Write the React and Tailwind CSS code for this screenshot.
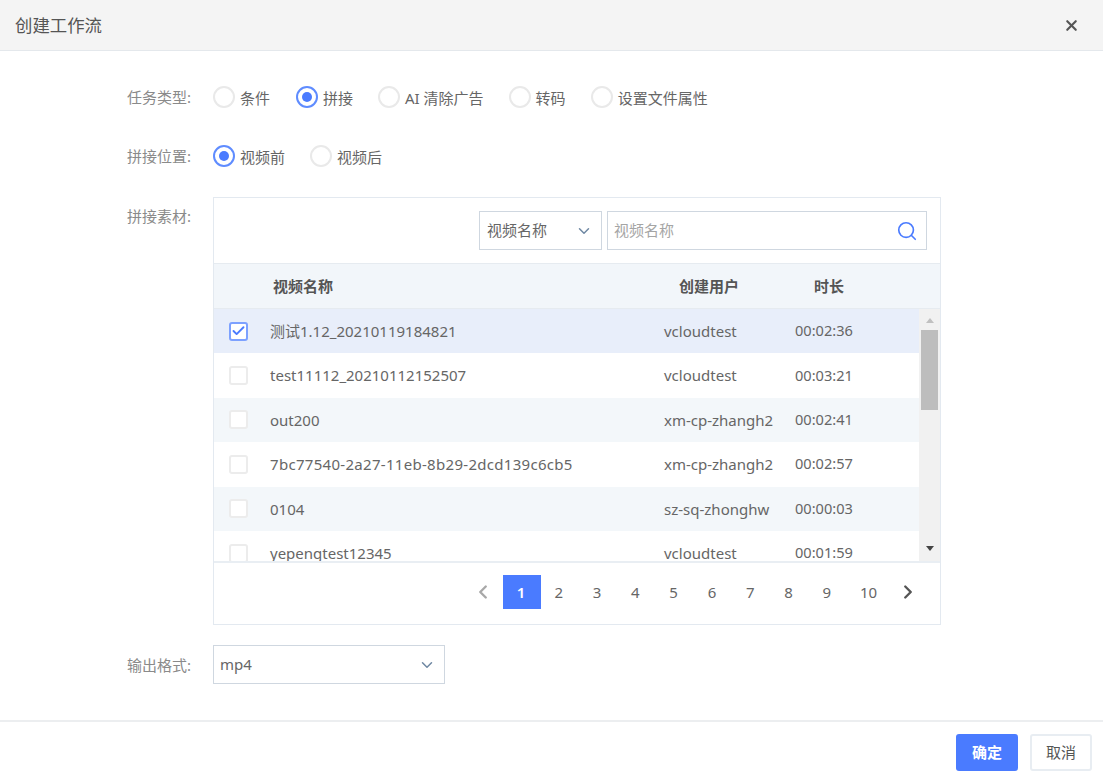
import { Search, ChevronDown, ChevronLeft, ChevronRight, Check, X } from "lucide-react";

const taskTypes = [
  { label: "条件", gap: "mr-[26px]" },
  { label: "拼接", checked: true, gap: "mr-[25px]" },
  { label: "AI 清除广告", gap: "mr-[25px]" },
  { label: "转码", gap: "mr-[25px]" },
  { label: "设置文件属性", gap: "" },
];

const videos = [
  { name: "测试1.12_20210119184821", user: "vcloudtest", time: "00:02:36", checked: true },
  { name: "test11112_20210112152507", user: "vcloudtest", time: "00:03:21" },
  { name: "out200", user: "xm-cp-zhangh2", time: "00:02:41" },
  { name: "7bc77540-2a27-11eb-8b29-2dcd139c6cb5", user: "xm-cp-zhangh2", time: "00:02:57", wide: true },
  { name: "0104", user: "sz-sq-zhonghw", time: "00:00:03" },
  { name: "yepengtest12345", user: "vcloudtest", time: "00:01:59" },
];

const Radio = ({ label, checked, gap }) => (
  <div className={`flex items-center ${gap}`}>
    <span
      className={`flex h-[22px] w-[22px] items-center justify-center rounded-full border-2 ${
        checked ? "border-[#5f8cff]" : "border-[#e9e9e9]"
      }`}
    >
      {checked && <span className="h-[10px] w-[10px] rounded-full bg-[#4a7bff]" />}
    </span>
    <span className="ml-[5px] mt-[3px] text-[15px] leading-[22px] text-[#666]">{label}</span>
  </div>
);

const Label = ({ children }) => (
  <div className="w-[86px] shrink-0 text-[15px] leading-[22px] text-[#8a8a8a]">{children}:</div>
);

const Row = ({ video, index }) => {
  const bg = video.checked ? "bg-[#e8eefa]" : index % 2 === 0 ? "bg-[#f3f7fa]" : "bg-white";
  return (
    <div className={`flex h-[44.4px] shrink-0 items-center text-[15px] text-[#666] ${bg}`}>
      <span
        className={`ml-[15px] flex h-[19px] w-[19px] shrink-0 items-center justify-center rounded-[3px] border-2 bg-white ${
          video.checked ? "border-[#7da1ff]" : "border-[#ececec]"
        }`}
      >
        {video.checked && <Check size={16} strokeWidth={3} className="text-[#4a7bff]" />}
      </span>
      <span className={`ml-[22px] w-[394px] shrink-0 whitespace-nowrap ${video.wide ? "tracking-[0.3px]" : ""}`}>
        {video.name}
      </span>
      <span className="w-[131px] shrink-0 whitespace-nowrap">{video.user}</span>
      <span className="whitespace-nowrap text-[14.6px]">{video.time}</span>
    </div>
  );
};

const Pagination = () => (
  <div className="flex h-[63px] items-start justify-end border-t-2 border-[#e9eef3] pt-[12px] pr-[16px] text-[15px] text-[#666]">
    <div className="flex h-[34px] w-[38px] items-center justify-center pr-[2px] text-[#a8a8a8]">
      <ChevronLeft size={22} strokeWidth={2.6} />
    </div>
    <div className="flex h-[34px] w-[38px] items-center justify-center pr-[1px] bg-[#4a7bff] font-semibold text-white">1</div>
    {[2, 3, 4, 5, 6, 7, 8, 9].map((n) => (
      <div key={n} className="flex h-[34px] w-[38.3px] items-center justify-center pr-[2px]">
        {n}
      </div>
    ))}
    <div className="flex h-[34px] w-[45px] items-center justify-center pr-[2px]">10</div>
    <div className="flex h-[34px] w-[32px] items-center justify-center text-[#555]">
      <ChevronRight size={22} strokeWidth={2.6} />
    </div>
  </div>
);

export default function App() {
  return (
    <div className="h-[780px] w-[1103px] bg-white font-['Noto_Sans','Noto_Sans_CJK_SC',sans-serif]">
      {/* Header */}
      <div className="flex h-[51px] items-center justify-between border-b border-[#e4e8ec] bg-[#f4f4f4] pl-[15px] pr-[23px]">
        <h1 className="text-[17.4px] text-[#555]">创建工作流</h1>
        <X size={17} strokeWidth={3} className="text-[#555]" />
      </div>

      <div className="h-[669px] pl-[127px]">
        {/* Task type */}
        <div className="flex items-center pt-[33px]">
          <Label>任务类型</Label>
          {taskTypes.map((t) => (
            <Radio key={t.label} {...t} />
          ))}
        </div>

        {/* Position */}
        <div className="mt-[34px] flex items-center">
          <Label>拼接位置</Label>
          <Radio label="视频前" checked gap="mr-[25px]" />
          <Radio label="视频后" gap="" />
        </div>

        {/* Material */}
        <div className="mt-[29px] flex">
          <div className="pt-[8px]">
            <Label>拼接素材</Label>
          </div>
          <div className="flex h-[428px] w-[728px] flex-col border border-[#e3e9f0]">
            <div className="flex h-[65px] shrink-0 items-start justify-end gap-[5px] pt-[13px] pr-[13px]">
              <div className="flex h-[39px] w-[123px] items-center justify-between border border-[#cfd7e0] pl-[7px] pr-[8px] text-[15px] text-[#666]">
                视频名称
                <ChevronDown size={18} className="text-[#6f88a3]" />
              </div>
              <div className="flex h-[39px] w-[320px] items-center justify-between border border-[#cfd7e0] pl-[6px] pr-[8px] text-[15px] text-[#a5a5a5]">
                视频名称
                <Search size={22} strokeWidth={1.8} className="text-[#4a7bff]" />
              </div>
            </div>

            <div className="flex h-[46px] shrink-0 items-center border-y border-[#e6ebf0] bg-[#f2f6fa] pt-[1px] text-[15px] font-semibold text-[#555]">
              <span className="ml-[59px] w-[406px] shrink-0">视频名称</span>
              <span className="w-[135px] shrink-0">创建用户</span>
              <span>时长</span>
            </div>

            <div className="flex h-[252px] shrink-0 overflow-hidden">
              <div className="flex w-[705px] shrink-0 flex-col overflow-hidden">
                {videos.map((v, i) => (
                  <Row key={v.name} video={v} index={i} />
                ))}
              </div>
              {/* Scrollbar */}
              <div className="flex w-[21px] flex-col items-center bg-[#f1f1f1] pt-[9px]">
                <span className="h-0 w-0 border-x-[4px] border-b-[5px] border-x-transparent border-b-[#c0c0c0]" />
                <span className="mt-[7px] h-[80px] w-[17px] bg-[#bdbdbd]" />
                <span className="mt-[136px] h-0 w-0 border-x-[4px] border-t-[5px] border-x-transparent border-t-[#444]" />
              </div>
            </div>

            <Pagination />
          </div>
        </div>

        {/* Output format */}
        <div className="mt-[20px] flex items-center">
          <Label>输出格式</Label>
          <div className="flex h-[39px] w-[232px] items-center justify-between border border-[#cfd7e0] pl-[6px] pr-[8px] text-[15px] text-[#666]">
            mp4
            <ChevronDown size={18} className="text-[#6f88a3]" />
          </div>
        </div>
      </div>

      {/* Footer */}
      <div className="flex h-[60px] items-start justify-end gap-[12px] border-t-2 border-[#eceef0] pt-[12px] pr-[11px]">
        <button className="h-[37px] w-[62px] rounded-[3px] bg-[#4a7bff] text-[15px] font-semibold text-white">确定</button>
        <button className="h-[37px] w-[62px] rounded-[3px] border-2 border-[#e8edf2] bg-white text-[15px] text-[#555]">取消</button>
      </div>
    </div>
  );
}
